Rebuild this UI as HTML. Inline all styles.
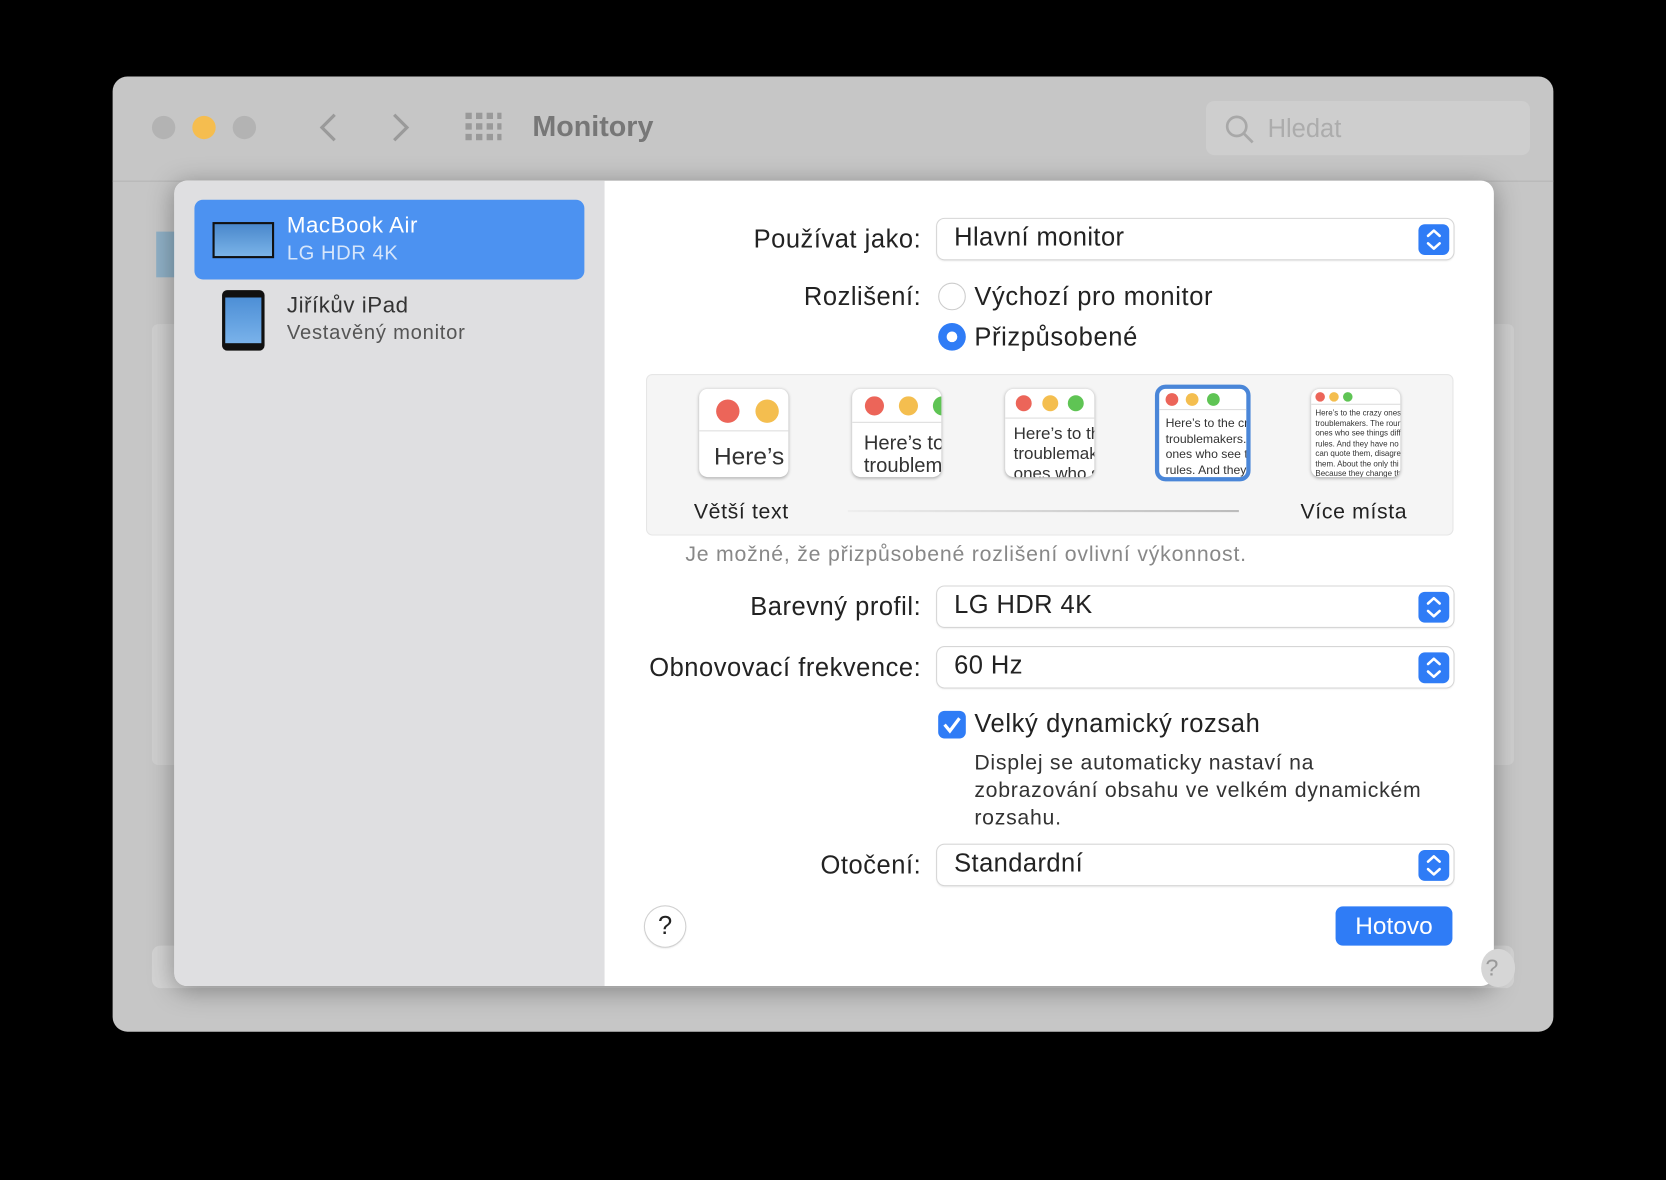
<!DOCTYPE html>
<html><head><meta charset="utf-8"><style>
*{margin:0;padding:0;box-sizing:border-box}
body{width:1666px;height:1180px;background:#000;overflow:hidden;font-family:"Liberation Sans",sans-serif}
#s{position:absolute;left:0;top:0;width:1568px;height:1111px;transform:scale(1.0625);transform-origin:0 0}
.a{position:absolute}
.win{left:106px;top:72px;width:1356px;height:899px;background:#c6c6c6;border-radius:14px;overflow:hidden}
.tl{width:22px;height:22px;border-radius:50%;top:109px;background:#b3b3b3}
.dlg{left:164px;top:170px;width:1242px;height:758px;background:#fff;border-radius:12px;overflow:hidden;box-shadow:0 4px 24px rgba(0,0,0,.35)}
.side{left:0;top:0;width:405px;height:758px;background:#dfdfe1}
.lbl{font-size:24px;letter-spacing:0.5px;color:#222;text-align:right;width:360px;white-space:nowrap}
.opt{font-size:24px;letter-spacing:0.6px;color:#222;white-space:nowrap}
.pop{left:882px;height:38px;width:486px;border-radius:7px;background:#fff;box-shadow:0 0 0 1px #d6d6d6,0 1px 2px rgba(0,0,0,.15);font-size:24px;letter-spacing:0.4px;color:#222;padding:4px 0 0 16px}
.st{position:absolute;right:4px;top:5px;width:29px;height:29px;border-radius:6px;background:#2f7cf6}
.card{background:#fff;border-radius:8px;box-shadow:0 1px 3px rgba(0,0,0,.3);overflow:hidden;width:84px;height:83px;top:366px}
.card .hd{border-bottom:1px solid #ddd}
.d{position:absolute;border-radius:50%}
.tx{color:#333;white-space:nowrap;position:absolute;font-family:"Liberation Sans Narrow","Liberation Sans",sans-serif}
</style></head><body><div id="s">
<div class="a win"></div>
<div class="a" style="left:106px;top:170px;width:1356px;height:1px;background:#b5b5b5"></div>
<div class="a" style="left:143px;top:305px;width:1282px;height:415px;background:#cfcfcf;border-radius:6px"></div>
<div class="a" style="left:147px;top:218px;width:18px;height:43px;background:#8fb0c6"></div>
<div class="a tl" style="left:143px"></div>
<div class="a tl" style="left:181px;background:#f5bd4f"></div>
<div class="a tl" style="left:219px"></div>
<svg class="a" style="left:295px;top:104px" width="100" height="32"><path d="M20 4 L8 16 L20 28" stroke="#9a9a9a" stroke-width="3" fill="none"/><path d="M76 4 L88 16 L76 28" stroke="#9a9a9a" stroke-width="3" fill="none"/></svg>
<svg class="a" style="left:438px;top:106px" width="34" height="28" fill="#999"><g><rect x="0" y="0" width="6" height="6"/><rect x="10" y="0" width="6" height="6"/><rect x="20" y="0" width="6" height="6"/><rect x="30" y="0" width="4" height="6"/><rect x="0" y="10" width="6" height="6"/><rect x="10" y="10" width="6" height="6"/><rect x="20" y="10" width="6" height="6"/><rect x="30" y="10" width="4" height="6"/><rect x="0" y="20" width="6" height="6"/><rect x="10" y="20" width="6" height="6"/><rect x="20" y="20" width="6" height="6"/><rect x="30" y="20" width="4" height="6"/></g></svg>
<div class="a" style="left:501px;top:104px;font-size:27px;font-weight:bold;color:#777">Monitory</div>
<div class="a" style="left:1135px;top:95px;width:305px;height:51px;background:#cecece;border-radius:8px"></div>
<svg class="a" style="left:1153px;top:108px" width="28" height="28"><circle cx="11" cy="11" r="9" stroke="#a8a8a8" stroke-width="2.5" fill="none"/><path d="M18 18 L26 26" stroke="#a8a8a8" stroke-width="2.5"/></svg>
<div class="a" style="left:1193px;top:108px;font-size:24px;color:#acacac">Hledat</div>
<div class="a" style="left:143px;top:890px;width:1282px;height:40px;background:#d3d3d3;border-radius:8px"></div>

<div class="a dlg">
 <div class="a side"></div>
 <div class="a" style="left:19px;top:18px;width:367px;height:75px;background:#4c92f1;border-radius:8px"></div>
 <div class="a" style="left:36px;top:39px;width:58px;height:34px;background:linear-gradient(#4a88cc,#7ab3e8);border:2px solid #111"></div>
 <div class="a" style="left:106px;top:31px;font-size:21px;letter-spacing:0.5px;color:#fff">MacBook Air</div>
 <div class="a" style="left:106px;top:58px;font-size:19px;letter-spacing:0.5px;color:#d6e6fb">LG HDR 4K</div>
 <div class="a" style="left:45px;top:103px;width:40px;height:57px;background:#111;border-radius:5px"></div>
 <div class="a" style="left:48px;top:110px;width:34px;height:43px;background:linear-gradient(#4d8fd6,#79b2ea)"></div>
 <div class="a" style="left:106px;top:106px;font-size:21px;letter-spacing:0.5px;color:#333">Jiříkův iPad</div>
 <div class="a" style="left:106px;top:133px;font-size:19px;letter-spacing:0.7px;color:#555">Vestavěný monitor</div>
</div>

<svg width="0" height="0" style="position:absolute"><defs><g id="ch"><path d="M9 11 L14.5 6 L20 11 M9 18 L14.5 23 L20 18" stroke="#fff" stroke-width="2.4" fill="none" stroke-linecap="round" stroke-linejoin="round"/></g></defs></svg>

<div class="a lbl" style="left:507px;top:212px">Používat jako:</div>
<div class="a pop" style="top:206px">Hlavní monitor<div class="st"><svg width="29" height="29"><use href="#ch"/></svg></div></div>
<div class="a lbl" style="left:507px;top:266px">Rozlišení:</div>
<div class="a" style="left:883px;top:266px;width:26px;height:26px;border-radius:50%;border:1px solid #ccc;background:#fff"></div>
<div class="a opt" style="left:917px;top:266px">Výchozí pro monitor</div>
<div class="a" style="left:883px;top:304px;width:26px;height:26px;border-radius:50%;background:#2f7cf6"><div class="a" style="left:8px;top:8px;width:10px;height:10px;border-radius:50%;background:#fff"></div></div>
<div class="a opt" style="left:917px;top:304px">Přizpůsobené</div>

<div class="a" style="left:608px;top:352px;width:760px;height:152px;background:#f5f5f5;border:1px solid #e6e6e6;border-radius:6px"></div>
<div class="a card" style="left:658px"><div class="hd" style="height:40px;position:relative"><div class="d" style="left:16px;top:10px;width:22px;height:22px;background:#ec6559"></div><div class="d" style="left:53px;top:10px;width:22px;height:22px;background:#f4be4f"></div></div><div class="tx" style="left:14px;top:50px;font-size:23px">Here’s</div></div>
<div class="a card" style="left:802px"><div class="hd" style="height:32px;position:relative"><div class="d" style="left:12px;top:7px;width:18px;height:18px;background:#ec6559"></div><div class="d" style="left:44px;top:7px;width:18px;height:18px;background:#f4be4f"></div><div class="d" style="left:76px;top:7px;width:18px;height:18px;background:#5fc454"></div></div><div class="tx" style="left:11px;top:41px;font-size:19px;line-height:21px">Here’s to the<br>troublemakers</div></div>
<div class="a card" style="left:946px"><div class="hd" style="height:28px;position:relative"><div class="d" style="left:10px;top:6px;width:15px;height:15px;background:#ec6559"></div><div class="d" style="left:35px;top:6px;width:15px;height:15px;background:#f4be4f"></div><div class="d" style="left:59px;top:6px;width:15px;height:15px;background:#5fc454"></div></div><div class="tx" style="left:8px;top:33px;font-size:16px;line-height:19px">Here’s to the<br>troublemakers<br>ones who see</div></div>
<div class="a" style="left:1087px;top:362px;width:90px;height:91px;border:4px solid #4a86d8;border-radius:10px;background:#fff;overflow:hidden"><div style="height:20px;border-bottom:1px solid #ddd;position:relative"><div class="d" style="left:6px;top:4px;width:12px;height:12px;background:#ec6559"></div><div class="d" style="left:25px;top:4px;width:12px;height:12px;background:#f4be4f"></div><div class="d" style="left:45px;top:4px;width:12px;height:12px;background:#5fc454"></div></div><div class="tx" style="left:6px;top:26px;font-size:11.5px;line-height:14.5px">Here’s to the crazy<br>troublemakers. The<br>ones who see things<br>rules. And they have</div></div>
<div class="a card" style="left:1234px"><div style="height:15px;border-bottom:1px solid #ddd;position:relative"><div class="d" style="left:4px;top:3px;width:9px;height:9px;background:#ec6559"></div><div class="d" style="left:17px;top:3px;width:9px;height:9px;background:#f4be4f"></div><div class="d" style="left:30px;top:3px;width:9px;height:9px;background:#5fc454"></div></div><div class="tx" style="left:4px;top:18px;font-size:7.5px;line-height:9.5px">Here’s to the crazy ones.<br>troublemakers. The round<br>ones who see things diff<br>rules. And they have no<br>can quote them, disagree<br>them. About the only thi<br>Because they change thi</div></div>
<div class="a" style="left:653px;top:471px;font-size:20px;letter-spacing:0.6px;color:#222">Větší text</div>
<div class="a" style="left:1224px;top:471px;font-size:20px;letter-spacing:0.6px;color:#222">Více místa</div>
<div class="a" style="left:798px;top:480px;width:368px;height:2px;background:linear-gradient(90deg,#eee,#bbb)"></div>
<div class="a" style="left:645px;top:511px;font-size:20px;letter-spacing:0.75px;color:#888;white-space:nowrap">Je možné, že přizpůsobené rozlišení ovlivní výkonnost.</div>

<div class="a lbl" style="left:507px;top:558px">Barevný profil:</div>
<div class="a pop" style="top:552px">LG HDR 4K<div class="st"><svg width="29" height="29"><use href="#ch"/></svg></div></div>
<div class="a lbl" style="left:507px;top:615px">Obnovovací frekvence:</div>
<div class="a pop" style="top:609px">60 Hz<div class="st"><svg width="29" height="29"><use href="#ch"/></svg></div></div>
<div class="a" style="left:883px;top:669px;width:26px;height:26px;border-radius:6px;background:#2f7cf6"><svg width="26" height="26"><path d="M6 13 L11 19 L20 7" stroke="#fff" stroke-width="3" fill="none"/></svg></div>
<div class="a opt" style="left:917px;top:668px">Velký dynamický rozsah</div>
<div class="a" style="left:917px;top:705px;font-size:20px;letter-spacing:0.7px;line-height:26px;color:#333;white-space:nowrap">Displej se automaticky nastaví na<br>zobrazování obsahu ve velkém dynamickém<br>rozsahu.</div>
<div class="a lbl" style="left:507px;top:801px">Otočení:</div>
<div class="a pop" style="top:795px">Standardní<div class="st"><svg width="29" height="29"><use href="#ch"/></svg></div></div>
<div class="a" style="left:607px;top:853px;width:38px;height:38px;border-radius:50%;background:#fff;box-shadow:0 0 0 1px #d0d0d0,0 1px 2px rgba(0,0,0,.2);text-align:center;font-size:24px;line-height:38px;color:#222">?</div>
<div class="a" style="left:1257px;top:853px;width:110px;height:37px;border-radius:7px;background:#2f7cf6;color:#fff;text-align:center;font-size:23px;line-height:36px">Hotovo</div>
<div class="a" style="left:1394px;top:893px;width:32px;height:36px;border-radius:50%;background:#d6d6d6;font-size:22px;color:#999;line-height:36px;padding-left:4px">?</div>
</div></body></html>
